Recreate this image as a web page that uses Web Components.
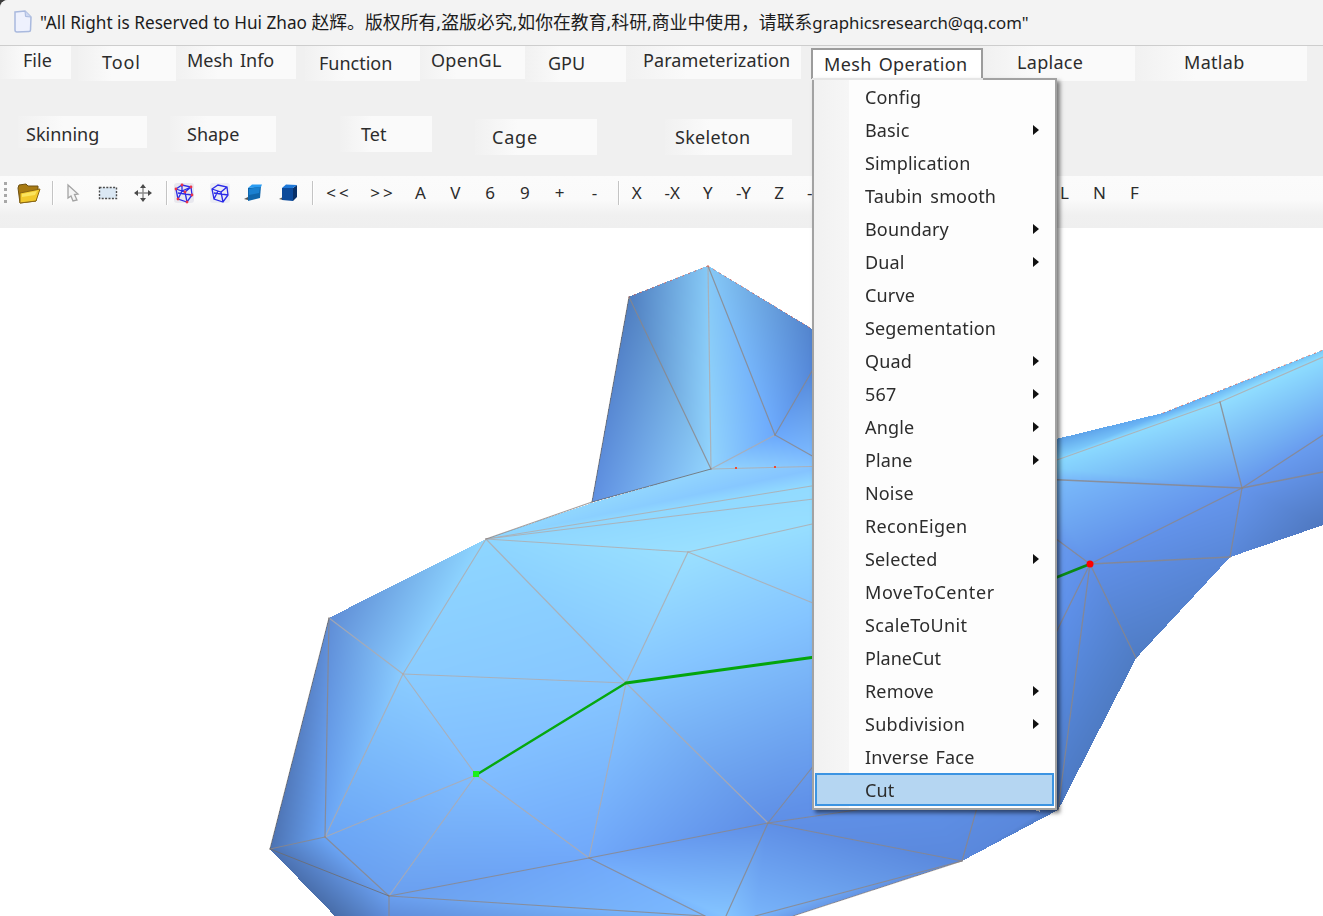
<!DOCTYPE html>
<html lang="en">
<head>
<meta charset="utf-8">
<title>Mesh viewer</title>
<style>
  html, body { margin: 0; height: 100%; background: #3c3c3c; overflow: hidden; }
  .cjk { font-size: 17.850px; }
  .mail { font-size: 16.800px; }
</style>
</head>
<body>
<app-window>
  <title-bar>"All Right is Reserved to Hui Zhao <span class="cjk">赵辉。版权所有,盗版必究,如你在教育,科研,商业中使用，请联系</span><span class="mail">graphicsresearch@qq.com"</span></title-bar>

  <menu-strip>
    <menu-row style="--row:70px">
      <menu-button style="--ml:0px;--w:71px;--h:33px;--pl:23px;--pt:2px">File</menu-button>
      <menu-button style="--ml:7px;--w:98px;--h:35px;--pl:24px;--pt:4px;--ls:.9px">Tool</menu-button>
      <menu-button style="--ml:0px;--w:120px;--h:33px;--pl:11px;--pt:2px;--ws:2px">Mesh Info</menu-button>
      <menu-button style="--ml:9px;--w:115px;--h:35px;--pl:14px;--pt:5px">Function</menu-button>
      <menu-button style="--ml:0px;--w:105px;--h:33px;--pl:11px;--pt:2px;--ls:.3px">OpenGL</menu-button>
      <menu-button style="--ml:0px;--w:101px;--h:36px;--pl:23px;--pt:5px">GPU</menu-button>
      <menu-button style="--ml:0px;--w:175px;--h:33px;--pl:17px;--pt:2px;--ls:.1px">Parameterization</menu-button>
      <menu-button open style="--ml:10px;--w:172px;--h:31px;--pl:13px;--pt:4px;--mt:2px;--ws:2px;--ls:.35px">Mesh Operation</menu-button>
      <menu-button style="--ml:2px;--w:150px;--h:35px;--pl:32px;--pt:4px;--ls:.3px">Laplace</menu-button>
      <menu-button style="--ml:0px;--w:172px;--h:35px;--pl:49px;--pt:4px;--ls:.3px">Matlab</menu-button>
    </menu-row>
    <menu-row style="--row:60px">
      <menu-button style="--ml:18px;--w:129px;--h:32px;--pl:8px;--pt:6px">Skinning</menu-button>
      <menu-button style="--ml:23px;--w:106px;--h:36px;--pl:17px;--pt:6px">Shape</menu-button>
      <menu-button style="--ml:64px;--w:92px;--h:36px;--pl:21px;--pt:6px">Tet</menu-button>
      <menu-button style="--ml:43px;--w:122px;--h:36px;--pl:17px;--pt:6px;--mt:3px;--ls:.8px">Cage</menu-button>
      <menu-button style="--ml:68px;--w:127px;--h:36px;--pl:10px;--pt:6px;--mt:3px;--ls:.3px">Skeleton</menu-button>
    </menu-row>
  </menu-strip>

  <tool-bar>
    <tool-handle></tool-handle>
    <tool-button style="--sx:-3px">
      <svg width="26" height="24" viewBox="0 0 26 24">
        <path d="M3 7 L4 4 L11 3 L13 5 L23 5 L23 8 L21 20 L5 22 Z" fill="#a87a12" stroke="#6e5010" stroke-width="1"/>
        <path d="M5 12 L25 8 L21 20 L5 22 Z" fill="#f2c92c" stroke="#8a6612" stroke-width="1"/>
        <path d="M7 13 L22 10 L20 14 L7 16 Z" fill="#fbe45e"/>
      </svg>
    </tool-button>
    <tool-separator></tool-separator>
    <tool-button>
      <svg width="18" height="20" viewBox="0 0 18 20">
        <path d="M4 2 L14 11 L10.500 11.500 L13 17 L9 18 L7 13 L4 15 Z" fill="#f4f4f4" stroke="#a4a4a4" stroke-width="1.300"/>
      </svg>
    </tool-button>
    <tool-button>
      <svg width="20" height="14" viewBox="0 0 20 14">
        <rect x="1.500" y="1.500" width="17" height="11" fill="#dbe8f4" stroke="#4c4c4c" stroke-width="1.400" stroke-dasharray="2 1.400"/>
      </svg>
    </tool-button>
    <tool-button>
      <svg width="20" height="20" viewBox="0 0 20 20">
        <path d="M10 1 L13 5 L7 5 Z M10 19 L13 15 L7 15 Z M1 10 L5 7 L5 13 Z M19 10 L15 7 L15 13 Z" fill="#4a4a4a"/>
        <path d="M10 5 V15 M5 10 H15" stroke="#8c8c8c" stroke-width="1.400"/>
      </svg>
    </tool-button>
    <tool-separator style="--smr:-1px"></tool-separator>
    <tool-button>
      <svg width="22" height="22" viewBox="0 0 22 22">
        <rect x="1" y="1" width="20" height="20" rx="3" fill="#e8e8ee"/>
        <path d="M3 7 L9 3 L18 5 L19 13 L14 20 L5 17 Z M3 7 L12 10 L18 5 M12 10 L14 20 M5 17 L9 9 L9 3 M5 11 L19 13 M3 7 L5 17 M9 9 L18 5" fill="none" stroke="#2a2ae8" stroke-width="1.300"/>
        <g fill="#e8344a"><circle cx="9" cy="3" r="1.400"/><circle cx="3" cy="7" r="1.400"/><circle cx="18" cy="5" r="1.400"/><circle cx="12" cy="10" r="1.400"/><circle cx="14" cy="20" r="1.400"/><circle cx="19" cy="13" r="1.400"/><circle cx="5" cy="17" r="1.400"/></g>
      </svg>
    </tool-button>
    <tool-button>
      <svg width="22" height="22" viewBox="0 0 22 22">
        <rect x="1" y="1" width="20" height="20" rx="3" fill="#ecedf4"/>
        <path d="M3 7 L9 3 L18 5 L19 13 L14 20 L5 17 Z M3 7 L12 10 L18 5 M12 10 L14 20 M5 17 L9 9 M5 11 L19 13" fill="none" stroke="#2a2ae8" stroke-width="1.300"/>
      </svg>
    </tool-button>
    <tool-button style="--sx:-3px">
      <svg width="20" height="20" viewBox="0 0 20 20">
        <path d="M1 16 L5 14 L5 17 Z" fill="#555"/>
        <path d="M5 5 L18 3 L17 15 L5 18 Z" fill="#0f66ac"/>
        <path d="M5 5 L9 1.500 L19 1.500 L18 4 Z" fill="#2a9cf2"/>
        <path d="M6 6 L17 4 L16 10 L6 12 Z" fill="#1a80d0"/>
      </svg>
    </tool-button>
    <tool-button style="--sx:-3px">
      <svg width="20" height="20" viewBox="0 0 20 20">
        <path d="M1 16 L5 14 L5 17 Z" fill="#555"/>
        <path d="M4 5 L15 5 L15 18 L4 17 Z" fill="#0c4a9a"/>
        <path d="M15 5 L19 2 L19 14 L15 18 Z" fill="#083068"/>
        <path d="M4 5 L8 1.500 L19 2 L15 5 Z" fill="#1e78d8"/>
      </svg>
    </tool-button>
    <tool-separator style="--sml:4.600px;--smr:3px"></tool-separator>
    <tool-button style="--tw:44px;--ls:3px">&lt;&lt;</tool-button>
    <tool-button style="--tw:44px;--ls:3px">&gt;&gt;</tool-button>
    <tool-button style="--tw:34.800px;--tml:-2px">A</tool-button>
    <tool-button style="--tw:34.800px">V</tool-button>
    <tool-button style="--tw:34.800px">6</tool-button>
    <tool-button style="--tw:34.800px">9</tool-button>
    <tool-button style="--tw:34.800px">+</tool-button>
    <tool-button style="--tw:34.800px">-</tool-button>
    <tool-separator style="--sml:6px;--smr:-1px"></tool-separator>
    <tool-button style="--tw:35.600px">X</tool-button>
    <tool-button style="--tw:35.600px">-X</tool-button>
    <tool-button style="--tw:35.600px">Y</tool-button>
    <tool-button style="--tw:35.600px">-Y</tool-button>
    <tool-button style="--tw:35.600px">Z</tool-button>
    <tool-button style="--tw:35.600px">-Z</tool-button>
    <tool-button style="--tw:35px;--tml:214.600px">L</tool-button>
    <tool-button style="--tw:35px">N</tool-button>
    <tool-button style="--tw:35px">F</tool-button>
  </tool-bar>

  <mesh-view></mesh-view>

  <popup-menu>
    <menu-entry>Config</menu-entry>
    <menu-entry arrow>Basic</menu-entry>
    <menu-entry>Simplication</menu-entry>
    <menu-entry style="--ws:3px">Taubin smooth</menu-entry>
    <menu-entry arrow>Boundary</menu-entry>
    <menu-entry arrow>Dual</menu-entry>
    <menu-entry>Curve</menu-entry>
    <menu-entry>Segementation</menu-entry>
    <menu-entry arrow>Quad</menu-entry>
    <menu-entry arrow>567</menu-entry>
    <menu-entry arrow>Angle</menu-entry>
    <menu-entry arrow>Plane</menu-entry>
    <menu-entry>Noise</menu-entry>
    <menu-entry style="--ls:.35px">ReconEigen</menu-entry>
    <menu-entry arrow>Selected</menu-entry>
    <menu-entry style="--ls:.6px">MoveToCenter</menu-entry>
    <menu-entry style="--ls:.35px">ScaleToUnit</menu-entry>
    <menu-entry style="--ls:0px">PlaneCut</menu-entry>
    <menu-entry arrow>Remove</menu-entry>
    <menu-entry arrow style="--ls:.3px">Subdivision</menu-entry>
    <menu-entry style="--ws:2px">Inverse Face</menu-entry>
    <menu-entry selected>Cut</menu-entry>
  </popup-menu>
</app-window>

<script>
const UI_FONT = '"Noto Sans", "Noto Sans CJK SC", sans-serif'

/**
 * Defines a simple element whose shadow root only holds styles and markup.
 *
 * @param {string} name - The tag name.
 * @param {string} html - The shadow markup, style included.
 */
function defineSimple (name, html) {
  const template = document.createElement('template')
  template.innerHTML = html
  customElements.define(name, class extends HTMLElement {
    constructor () {
      super()
      this.attachShadow({ mode: 'open' }).appendChild(template.content.cloneNode(true))
    }
  })
}

defineSimple('app-window', `
  <style>
    :host {
      position: relative;
      display: flex;
      flex-direction: column;
      width: 1323px;
      height: 916px;
      background: #f0f0f0;
      border-top-left-radius: 8px;
      overflow: hidden;
      font-family: ${UI_FONT};
      color: #2b2b2b;
    }
  </style>
  <slot></slot>
`)

defineSimple('title-bar', `
  <style>
    :host {
      display: flex;
      align-items: center;
      flex: none;
      height: 46px;
      box-sizing: border-box;
      padding: 0 0 3px 13px;
      background: #f3f3f3;
      border-bottom: 1px solid #cdcdcd;
      font-size: 17.200px;
      color: #1c1c1c;
      white-space: pre;
    }
    svg { flex: none; margin-right: 8px; filter: blur(.3px); }
    .text { display: block; }
  </style>
  <svg width="19" height="23" viewBox="0 0 19 23">
    <path d="M2 2 L12 1 L18 7 L17.500 20 Q17.500 21.500 16 21.500 L4 22 Q2 22 2 20 Z" fill="#eef1fd" stroke="#a9b9de" stroke-width="1.500"/>
    <path d="M12 1 L12.500 6.500 L18 7" fill="#cdd8f2" stroke="#a9b9de" stroke-width="1"/>
  </svg>
  <span class="text"><slot></slot></span>
`)

defineSimple('menu-strip', `
  <style>
    :host { display: block; flex: none; height: 130px; background: #f0f0f0; }
  </style>
  <slot></slot>
`)

defineSimple('menu-row', `
  <style>
    :host { display: flex; align-items: flex-start; height: var(--row); }
  </style>
  <slot></slot>
`)

customElements.define('menu-button', class extends HTMLElement {
  constructor () {
    super()
    this.attachShadow({ mode: 'open' }).innerHTML = `
      <style>
        :host {
          display: block;
          flex: none;
          box-sizing: border-box;
          margin-left: var(--ml);
          margin-top: var(--mt, 0);
          width: var(--w);
          height: var(--h);
          padding-left: var(--pl);
          padding-top: var(--pt);
          background: linear-gradient(90deg, #f1f1f1, #fafafa 35%);
          font-size: 18px;
          line-height: 24px;
          letter-spacing: var(--ls, 0);
          word-spacing: var(--ws, 0);
          white-space: nowrap;
          color: #2c2c2c;
        }
        :host([open]) {
          background: #fff;
          border: 2px solid #9c9c9c;
          border-bottom: 0;
          padding-left: calc(var(--pl) - 2px);
          padding-top: calc(var(--pt) - 2px);
        }
      </style>
      <slot></slot>
    `
  }
})

defineSimple('tool-bar', `
  <style>
    :host {
      display: flex;
      flex: none;
      align-items: flex-start;
      height: 52px;
      background: linear-gradient(#fbfbfb, #fafafa 45%, #f0f0f0 75%, #efefef);
    }
  </style>
  <slot></slot>
`)

defineSimple('tool-handle', `
  <style>
    :host {
      display: block;
      flex: none;
      width: 3px;
      height: 22px;
      margin: 6px 5px 0 4px;
      background: repeating-linear-gradient(#a8a8a8 0 3px, transparent 3px 6px);
    }
  </style>
`)

defineSimple('tool-separator', `
  <style>
    :host {
      display: block;
      flex: none;
      width: 1px;
      height: 24px;
      margin: 5px var(--smr, 1px) 0 var(--sml, 5px);
      background: #c4c4c4;
      border-right: 1px solid #fff;
    }
  </style>
`)

defineSimple('tool-button', `
  <style>
    :host {
      display: flex;
      flex: none;
      align-items: center;
      justify-content: center;
      width: var(--tw, 35.200px);
      height: 32px;
      margin-left: var(--tml, 0);
      font-size: 17px;
      letter-spacing: var(--ls, 0);
      color: #2c2c2c;
    }
    ::slotted(svg) {
      filter: blur(.4px);
      margin-top: 2px;
      margin-left: var(--sx, 0);
    }
  </style>
  <slot></slot>
`)

defineSimple('popup-menu', `
  <style>
    :host {
      position: absolute;
      left: 812px;
      top: 78px;
      width: 245px;
      height: 732px;
      box-sizing: border-box;
      padding: 0 1px;
      background: linear-gradient(90deg, #f1f1f1, #f6f6f6 35px, #fdfdfd 35px);
      border: 2px solid #a2a2a2;
      box-shadow: 3px 3px 4px rgba(0, 0, 0, .5);
      z-index: 2;
    }
    .tab {
      position: absolute;
      left: -2px;
      top: -2px;
      width: 171px;
      height: 2px;
      background: #e6e6e6;
    }
  </style>
  <div class="tab"></div>
  <slot></slot>
`)

customElements.define('menu-entry', class extends HTMLElement {
  constructor () {
    super()
    this.attachShadow({ mode: 'open' }).innerHTML = `
      <style>
        :host {
          display: flex;
          align-items: center;
          box-sizing: border-box;
          height: 33px;
          padding-left: 50px;
          font-size: 18px;
          letter-spacing: var(--ls, .15px);
          word-spacing: var(--ws, 0);
          color: #2c2c2c;
          white-space: nowrap;
        }
        :host([selected]) {
          background: #b5d6f2;
          outline: 2px solid #3c94e2;
          outline-offset: -2px;
        }
        .text { flex: 1; }
        .arrow {
          flex: none;
          width: 0;
          height: 0;
          margin-right: 15px;
          border-left: 6px solid #111;
          border-top: 5px solid transparent;
          border-bottom: 5px solid transparent;
        }
      </style>
      <span class="text"><slot></slot></span>
      ${this.hasAttribute('arrow') ? '<span class="arrow"></span>' : ''}
    `
  }
})

/**
 * The 3D view: a shaded triangle mesh with its wireframe and the cut path.
 */
customElements.define('mesh-view', class extends HTMLElement {
  #canvas

  constructor () {
    super()
    this.attachShadow({ mode: 'open' }).innerHTML = `
      <style>
        :host { display: block; flex: 1; background: #fff; }
        canvas { display: block; filter: blur(.35px); }
      </style>
      <canvas width="1323" height="688"></canvas>
    `
    this.#canvas = this.shadowRoot.querySelector('canvas')
  }

  connectedCallback () {
    const v = {
      T: [708, 266, '#86c9f6'], A: [629, 297, '#4f7ec0'], B: [592, 502, '#5f90e2'], C: [711, 469, '#92d4fd'],
      BL2: [592, 503, '#8ed6ff'],
      D: [775, 435, '#6ba8fc'], R1: [830, 340, '#4a78c6'], R2: [830, 466, '#84c2ff'],
      E: [486, 539, '#8ed6ff'], G: [688, 552, '#9ae0ff'], P1: [830, 483, '#92dbff'], P2: [830, 497, '#94dcff'],
      P3: [830, 520, '#96deff'], Q: [830, 610, '#84c4ff'],
      V1: [329, 618, '#5f8dd6'], V2: [403, 674, '#8accff'], V3: [626, 683, '#86c6ff'], V4: [476, 775, '#80bdff'],
      V5: [325, 837, '#6aa5f5'], V6: [270, 849, '#4c72b2'], V7: [389, 896, '#6a9fef'], V8: [589, 858, '#70a8fa'],
      V9: [768, 823, '#5f8fe6'],
      BL: [335, 916, '#486da9'], B1: [389, 916, '#5f8edc'], B2: [705, 916, '#7cbaff'], B3: [726, 916, '#84c4ff'],
      B4: [755, 916, '#78b4fa'], B5: [793, 916, '#6a9cea'], X: [962, 861, '#5a88dc'], Y: [1058, 810, '#4d7ac4'],
      Z: [900, 760, '#6296ee'],
      S1: [1040, 443, '#5c9fe5'], S2: [1163, 413, '#62abf2'], S3: [1323, 350, '#78c8f8'],
      I1: [1040, 466, '#88d8ff'], I2: [1220, 402, '#92deff'], I3: [1323, 357, '#8cdcff'],
      M: [1040, 479, '#7cbefc'], K: [1242, 488, '#6596ec'], N1: [1323, 435, '#6a9ef0'], N2: [1323, 472, '#5f8ee0'],
      N3: [1323, 525, '#4f78c0'], J: [1230, 557, '#5987d8'], R: [1090, 564, '#6090e8'], W: [1040, 527, '#6ca0f2'],
      Lo: [1040, 660, '#5c90ea'], H: [1136, 658, '#4f7cc4'], LY: [1040, 812, '#5a88dc']
    }

    const faces = `A B C, A C T, T C D, T D R1, C D R2, D R1 R2,
      E BL2 C, E C R2, E R2 P1, E P1 P2, E P2 G, G P2 P3, G P3 Q, E G V3, E V2 V3, E V1 V2,
      V1 V2 V5, V1 V5 V6, V2 V3 V4, V2 V4 V5, V3 V4 V8, V4 V5 V7, V4 V7 V8, V5 V6 V7,
      G V3 Q, V3 Q V9, V9 Q Z, V3 V8 V9, V6 V7 BL, V7 BL B1, V7 B1 B2, V7 V8 B2,
      V8 B2 B3, V8 V9 B3, V9 B3 B4, V9 B4 X, B4 B5 X, V9 X Z, X Z LY, X LY Y,
      S1 S2 I1, S2 I1 I2, S2 S3 I2, S3 I2 I3, I1 I2 K, I1 M K, I2 I3 K, I3 N1 K, K N1 N2, K N2 N3, K N3 J,
      M K R, K R J, M W R, W R Lo, R J H, R H Lo, Lo H Y, Lo Y LY`
      .split(',').map(f => f.trim().split(/\s+/).map(n => v[n]))

    const ctx = this.#canvas.getContext('2d')
    const width = this.#canvas.width
    const height = this.#canvas.height
    const image = ctx.createImageData(width, height)
    image.data.fill(255)
    faces.forEach(face => this.#shade(image, face))
    ctx.putImageData(image, 0, 0)

    ctx.translate(0, -228)
    ctx.lineCap = 'round'

    const edge = (a, b, colour, w) => {
      ctx.strokeStyle = colour
      ctx.lineWidth = w
      ctx.beginPath()
      ctx.moveTo(a[0], a[1])
      ctx.lineTo(b[0], b[1])
      ctx.stroke()
    }

    // wireframe, given as vertex names or raw end points
    const light = 'rgba(176, 170, 170, .8)'
    const mid = 'rgba(140, 134, 134, .8)'
    const dark = 'rgba(110, 108, 108, .8)'

    const lightEdges = `T C, C D, C R2, E P1, E P2, E G, G P3, G V3, G Q, E V2, E V3, V2 V3, V2 V4, V1 V2,
      V2 V5, V3 V8, V3 V9, V4 V5, V4 V7, V4 V8`
    const midEdges = `T D, A C, D R1, D R2, V1 V5, V5 V7, V8 V7, V8 V9, V8 B2, V9 B3, V9 X, B4 X, V5 V6, V7 B2, V7 B1, E B`
    const darkEdges = `A B, B C, V6 V7, V1 V6`
    lightEdges.split(',').forEach(e => { const [a, b] = e.trim().split(' '); edge(v[a], v[b], light, 1.200) })
    midEdges.split(',').forEach(e => { const [a, b] = e.trim().split(' '); edge(v[a], v[b], mid, 1.200) })
    darkEdges.split(',').forEach(e => { const [a, b] = e.trim().split(' '); edge(v[a], v[b], dark, 1) })

    edge(v.V9, [870, 808], mid, 1.200)
    edge(v.V9, [830, 745], mid, 1.200)
    edge(v.X, [982, 790], mid, 1.200)
    edge(v.B5, v.X, mid, 1)

    edge(v.I1, v.I2, light, 1.200)
    edge(v.I2, v.I3, light, 1.200)
    edge(v.I2, v.K, mid, 1.300)
    edge(v.M, v.K, mid, 1.300)
    edge(v.K, v.N1, mid, 1.300)
    edge(v.K, v.N2, mid, 1.300)
    edge(v.K, v.J, mid, 1.300)
    edge(v.K, v.R, mid, 1.300)
    edge(v.R, v.J, mid, 1.400)
    edge(v.R, v.H, mid, 1.300)
    edge(v.R, v.W, mid, 1.300)
    edge(v.R, [1040, 665], mid, 1.300)
    edge(v.R, v.Y, mid, 1.300)

    // orange specks along the upper silhouette
    ctx.setLineDash([1.500, 5])
    const speck = 'rgba(232, 96, 72, .75)'
    edge(v.T, v.A, speck, 1)
    edge(v.T, [830, 340], speck, 1)
    edge(v.S2, v.S3, speck, 1)
    ctx.setLineDash([])
    ctx.fillStyle = '#f04a30'
    ctx.fillRect(735, 467, 2, 2)
    ctx.fillRect(774, 466, 2, 2)

    // the cut path
    edge(v.V4, v.V3, '#06a80e', 2.400)
    edge(v.V3, [830, 655], '#04a50c', 3)
    edge([1040, 584], v.R, '#0a8a14', 2.600)

    ctx.fillStyle = '#1cf01c'
    ctx.fillRect(473, 771, 6, 6)
    ctx.fillStyle = '#f00'
    ctx.beginPath()
    ctx.arc(1090, 564, 3.500, 0, Math.PI * 2)
    ctx.fill()
  }

  /**
   * Fills one triangle with interpolated vertex colours.
   *
   * @param {ImageData} image - The target image.
   * @param {Array} face - Three vertices, each [x, y, hexColour].
   */
  #shade (image, face) {
    const [a, b, c] = face
    const ca = this.#rgb(a[2])
    const cb = this.#rgb(b[2])
    const cc = this.#rgb(c[2])
    const area = (b[0] - a[0]) * (c[1] - a[1]) - (c[0] - a[0]) * (b[1] - a[1])
    if (area === 0) return

    const minX = Math.max(0, Math.floor(Math.min(a[0], b[0], c[0])))
    const maxX = Math.min(image.width - 1, Math.ceil(Math.max(a[0], b[0], c[0])))
    const minY = Math.max(228, Math.floor(Math.min(a[1], b[1], c[1])))
    const maxY = Math.min(915, Math.ceil(Math.max(a[1], b[1], c[1])))

    for (let y = minY; y <= maxY; y++) {
      for (let x = minX; x <= maxX; x++) {
        const px = x + 0.5
        const py = y + 0.5
        const wb = ((px - a[0]) * (c[1] - a[1]) - (c[0] - a[0]) * (py - a[1])) / area
        const wc = ((b[0] - a[0]) * (py - a[1]) - (px - a[0]) * (b[1] - a[1])) / area
        const wa = 1 - wb - wc
        if (wa < -0.002 || wb < -0.002 || wc < -0.002) continue
        const i = ((y - 228) * image.width + x) * 4
        for (let k = 0; k < 3; k++) {
          image.data[i + k] = wa * ca[k] + wb * cb[k] + wc * cc[k]
        }
      }
    }
  }

  #rgb (hex) {
    return [1, 3, 5].map(i => parseInt(hex.slice(i, i + 2), 16))
  }
})
</script>
</body>
</html>
